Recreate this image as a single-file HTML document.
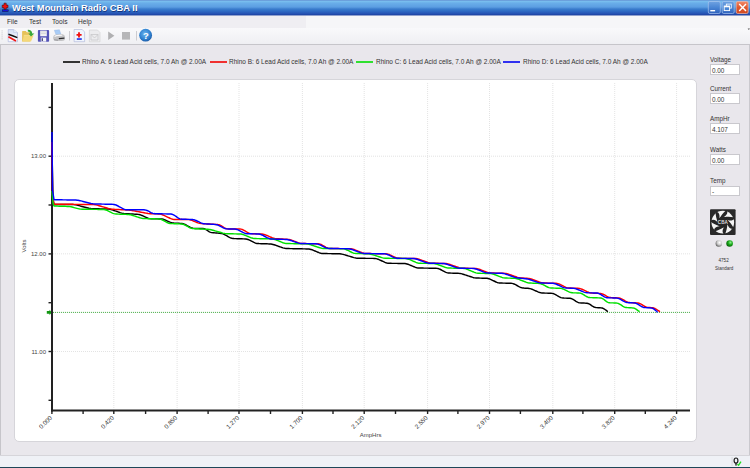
<!DOCTYPE html>
<html><head><meta charset="utf-8"><style>
*{margin:0;padding:0;box-sizing:border-box}
html,body{width:750px;height:468px;overflow:hidden;background:#e9e7ec;font-family:"Liberation Sans",sans-serif}
.abs{position:absolute}
#title{left:0;top:0;width:750px;height:16px;background:linear-gradient(#5a7ec8 0px,#7cc2f0 1px,#6aaee9 3px,#5c9ee2 7px,#3a7ccc 9px,#2f6cc4 11px,#2654b4 13.5px,#2048a8 14.5px,#c9cde0 16px)}
#title .t{left:12px;top:2.6px;font-size:9.4px;line-height:10px;font-weight:bold;color:#fff;text-shadow:0.6px 0.6px 0.4px rgba(10,30,90,0.7)}
#menu{left:0;top:16px;width:750px;height:12px;background:#efeef2}
#menu span{position:absolute;top:1px;font-size:7.7px;line-height:9px;color:#333;transform:scaleX(0.86);transform-origin:0 0}
#tool{left:0;top:28px;width:750px;height:16px;background:linear-gradient(#f9f9fb,#efeff3)}
#toolline{left:0;top:44px;width:750px;height:1px;background:#c6c5ca}
#lstrip{left:0;top:45px;width:1px;height:410px;background:#c6c5ca}
#rstrip{left:748.8px;top:45px;width:1.2px;height:410px;background:#cac9ce}
#panel{left:13.6px;top:78.7px;width:683px;height:363px;background:#fff;border:1.5px solid #d6d5da;border-radius:5px}
#status{left:0;top:455px;width:750px;height:12px;background:#eff1f6;border-top:1px solid #d6d5da}
#sbot{left:0;top:467px;width:750px;height:1px;background:#1e4658}
.leg{top:57.5px;font-size:7px;line-height:8px;color:#333;white-space:nowrap;transform:scaleX(0.926);transform-origin:0 0}
.ll{top:61px;height:1.6px;width:17px}
.lab{left:710px;font-size:6.3px;color:#333;line-height:7px}
.box{left:710.3px;width:29.5px;height:10.5px;background:#fff;border:1px solid #c9c8cd;font-size:6.4px;color:#333;padding-left:0.6px;padding-top:0.8px;line-height:10.6px;overflow:hidden}
</style></head><body>
<div id="title" class="abs"><div class="t abs">West Mountain Radio CBA II</div></div>
<svg class="abs" style="left:0;top:0" width="12" height="16" viewBox="0 0 12 16">
<path d="M4,3.2 L6.2,3.2 L6.2,5.1 L8,5.1 L8,7.7 L6.2,7.7 L6.2,9.3 L4,9.3 L4,7.7 L2.2,7.7 L2.2,5.1 L4,5.1 Z" fill="#f01010" stroke="#401010" stroke-width="0.6"/>
<rect x="2.4" y="9.8" width="5.8" height="1.8" fill="#1818e0" stroke="#101040" stroke-width="0.5"/>
</svg>

<svg class="abs" style="left:700px;top:0" width="50" height="16" viewBox="0 0 50 16">
<defs>
<linearGradient id="bg1" x1="0" y1="0" x2="0" y2="1"><stop offset="0" stop-color="#6fa2e2"/><stop offset="0.5" stop-color="#4a86d4"/><stop offset="1" stop-color="#2f62bd"/></linearGradient>
<linearGradient id="bg2" x1="0" y1="0" x2="0" y2="1"><stop offset="0" stop-color="#f08a6a"/><stop offset="0.5" stop-color="#e0582e"/><stop offset="1" stop-color="#d04a22"/></linearGradient>
</defs>
<rect x="8.3" y="1.5" width="12" height="12" rx="1.5" fill="url(#bg1)" stroke="#a8c4ee" stroke-width="0.7"/>
<rect x="22.2" y="1.5" width="12" height="12" rx="1.5" fill="url(#bg1)" stroke="#a8c4ee" stroke-width="0.7"/>
<rect x="36.2" y="1.5" width="12" height="12" rx="1.5" fill="url(#bg2)" stroke="#f4b8a8" stroke-width="0.7"/>
<rect x="10.3" y="10" width="4.8" height="1.4" fill="#fff"/>
<rect x="26.3" y="4.1" width="5" height="4" fill="none" stroke="#fff" stroke-width="0.8"/>
<rect x="24.2" y="6" width="5.4" height="4.6" fill="#4a86d4" stroke="#fff" stroke-width="0.9"/>
<rect x="24.2" y="6" width="5.4" height="1.3" fill="#fff"/>
<path d="M39.2,4 L46,11 M46,4 L39.2,11" stroke="#fff" stroke-width="1.4"/>
</svg>

<div id="menu" class="abs"><div class="abs" style="left:306px;top:0;width:444px;height:12px;background:#f6f6f8"></div><span style="left:7.2px">File</span><span style="left:28.8px">Test</span><span style="left:52.3px">Tools</span><span style="left:78px">Help</span></div>
<div id="tool" class="abs"></div>
<div id="toolline" class="abs"></div>
<svg class="abs" style="left:745px;top:27px" width="5" height="5" viewBox="0 0 5 5"><path d="M2.6,1.4 L5,1.4 L3.8,3 Z" fill="#555"/></svg>

<svg class="abs" style="left:0;top:0" width="160" height="46" viewBox="0 0 160 46">
<!-- grip -->
<g fill="#c4c4c8"><rect x="1.5" y="30.5" width="1.2" height="0.8"/><rect x="1.5" y="32.5" width="1.2" height="0.8"/><rect x="1.5" y="34.5" width="1.2" height="0.8"/><rect x="1.5" y="36.5" width="1.2" height="0.8"/><rect x="1.5" y="38.5" width="1.2" height="0.8"/></g>
<!-- icon1 chart doc -->
<defs><linearGradient id="docg" x1="0" y1="0" x2="0" y2="1"><stop offset="0" stop-color="#d4e0f6"/><stop offset="0.55" stop-color="#eaf0fb"/><stop offset="1" stop-color="#fbfcff"/></linearGradient></defs>
<path d="M8.2,29.6 L13.6,29.6 L17.5,32.6 L17.5,41.7 L8.2,41.7 Z" fill="url(#docg)" stroke="#a3acd8" stroke-width="0.6"/>
<path d="M13.6,29.6 L13.6,32.6 L17.5,32.6" fill="#e4ecf8" stroke="#b8c0e0" stroke-width="0.5"/>
<path d="M8.4,34.3 Q12.3,35.6 17.3,37.6" fill="none" stroke="#111" stroke-width="1.5"/>
<path d="M8.4,36.7 L16,40.9" fill="none" stroke="#f01818" stroke-width="1.7"/>
<!-- icon2 folder -->
<path d="M22.1,31.6 Q22.1,31 22.8,31 L25.8,31 L26.8,32.2 L30,32.2 L30,41.5 L22.1,41.5 Z" fill="#e6c258"/>
<path d="M23.8,35.3 L33.5,35.6 L31,41.4 L22.4,41.5 Z" fill="#f4d878"/>
<path d="M23.8,35.3 L33.5,35.6" stroke="#fae6a0" stroke-width="0.6"/>
<path d="M27.8,29.8 Q31.8,29.6 32.2,33.4 L34.4,33.4 L31,36.6 L28.4,33.4 L30.2,33.4 Q30,31.7 27.8,31.6 Z" fill="#3aa83a"/>
<!-- icon3 floppy -->
<rect x="37.9" y="30.1" width="11.2" height="11.7" rx="0.8" fill="#5454b8"/>
<rect x="40.2" y="30.6" width="6.6" height="5.6" fill="#f2f2f4"/>
<rect x="40.8" y="31.6" width="5.4" height="0.7" fill="#c8c8cc"/><rect x="40.8" y="33.4" width="5.4" height="0.7" fill="#c8c8cc"/>
<rect x="40.8" y="37.6" width="5.4" height="4.0" fill="#f4f4f8"/>
<rect x="41.6" y="38.2" width="1.3" height="2.8" fill="#3a3a7a"/>
<!-- icon4 printer -->
<path d="M54.3,30.3 L59.4,29.7 L60.9,34.2 L56.2,35 Z" fill="#a8ccf6" stroke="#90b0e0" stroke-width="0.4"/>
<path d="M53.2,37 Q53.4,35 56,34.6 L62,34 Q64.8,34.6 65,36.6 L65,39.2 Q64.6,40.9 62,40.9 L56,40.9 Q53.2,40.6 53.2,38.8 Z" fill="#c4c4c6"/>
<path d="M54.6,36.6 Q56,35.4 58.5,35.4 L62.2,35.2" fill="none" stroke="#f6f6f8" stroke-width="1.1"/>
<path d="M58.8,38.6 L64.4,38.2" stroke="#2c2c2e" stroke-width="1.2"/>
<path d="M54,39.8 L58,40.2" stroke="#8c8c90" stroke-width="0.8"/>
<!-- separator -->
<rect x="69" y="31" width="0.9" height="9.5" fill="#c8c8cc"/>
<!-- icon5 doc plus -->
<path d="M74.1,29.5 L82.2,29.5 L84.6,32 L84.6,41.7 L74.1,41.7 Z" fill="#f0f5fd" stroke="#a9b4d6" stroke-width="0.6"/>
<path d="M76.5,34.1 L78.1,34.1 L78.1,32.2 L79.9,32.2 L79.9,34.1 L81.6,34.1 L81.6,35.8 L79.9,35.8 L79.9,37.6 L78.1,37.6 L78.1,35.8 L76.5,35.8 Z" fill="#f01010"/>
<rect x="76.8" y="38.2" width="5.0" height="1.7" fill="#2a3ae6"/>
<!-- icon6 disabled doc -->
<path d="M89.4,30 L97.5,30 L100,32.5 L100,41.8 L89.4,41.8 Z" fill="#ececee" stroke="#d0d0d2" stroke-width="0.6"/>
<path d="M91,34.5 L98,34.5 L98,40 L91,40 Z M91,34.5 L94.5,38 L98,34.5" fill="none" stroke="#c4c4c6" stroke-width="0.7"/>
<!-- play -->
<path d="M108.2,31.6 L114.4,35.8 L108.2,40 Z" fill="#b0b0b2"/>
<!-- stop -->
<rect x="122" y="32" width="8" height="7.6" fill="#b6b6b8"/>
<!-- separator -->
<rect x="136" y="31" width="0.9" height="9.5" fill="#c8c8cc"/>
<!-- help -->
<defs><radialGradient id="hg" cx="0.45" cy="0.4" r="0.6"><stop offset="0" stop-color="#6cb4ee"/><stop offset="0.7" stop-color="#2f82d0"/><stop offset="1" stop-color="#1a5aa8"/></radialGradient></defs>
<circle cx="145.6" cy="35.2" r="6.4" fill="url(#hg)"/>
<text x="145.8" y="38.9" font-size="9.5" font-weight="bold" fill="#fff" text-anchor="middle" font-family="Liberation Sans, sans-serif">?</text>
</svg>

<div id="lstrip" class="abs"></div>
<div id="rstrip" class="abs"></div>
<div class="abs ll" style="left:63px;background:#333"></div><div class="abs leg" style="left:82.3px">Rhino A: 6 Lead Acid cells, 7.0 Ah @ 2.00A</div>
<div class="abs ll" style="left:209.6px;background:#f03030"></div><div class="abs leg" style="left:229.2px">Rhino B: 6 Lead Acid cells, 7.0 Ah @ 2.00A</div>
<div class="abs ll" style="left:356.4px;background:#30e030"></div><div class="abs leg" style="left:376px">Rhino C: 6 Lead Acid cells, 7.0 Ah @ 2.00A</div>
<div class="abs ll" style="left:503.1px;background:#3030f0"></div><div class="abs leg" style="left:522.7px">Rhino D: 6 Lead Acid cells, 7.0 Ah @ 2.00A</div>
<div id="panel" class="abs"></div>
<svg class="abs" style="left:0;top:0" width="750" height="468" viewBox="0 0 750 468" font-family="Liberation Sans, sans-serif">
<line x1="113.8" y1="83" x2="113.8" y2="409.5" stroke="#dcdcdc" stroke-width="0.8" stroke-dasharray="1,1"/>
<line x1="177.1" y1="83" x2="177.1" y2="409.5" stroke="#dcdcdc" stroke-width="0.8" stroke-dasharray="1,1"/>
<line x1="239.0" y1="83" x2="239.0" y2="409.5" stroke="#dcdcdc" stroke-width="0.8" stroke-dasharray="1,1"/>
<line x1="302.4" y1="83" x2="302.4" y2="409.5" stroke="#dcdcdc" stroke-width="0.8" stroke-dasharray="1,1"/>
<line x1="364.2" y1="83" x2="364.2" y2="409.5" stroke="#dcdcdc" stroke-width="0.8" stroke-dasharray="1,1"/>
<line x1="427.6" y1="83" x2="427.6" y2="409.5" stroke="#dcdcdc" stroke-width="0.8" stroke-dasharray="1,1"/>
<line x1="489.5" y1="83" x2="489.5" y2="409.5" stroke="#dcdcdc" stroke-width="0.8" stroke-dasharray="1,1"/>
<line x1="552.8" y1="83" x2="552.8" y2="409.5" stroke="#dcdcdc" stroke-width="0.8" stroke-dasharray="1,1"/>
<line x1="614.7" y1="83" x2="614.7" y2="409.5" stroke="#dcdcdc" stroke-width="0.8" stroke-dasharray="1,1"/>
<line x1="676.6" y1="83" x2="676.6" y2="409.5" stroke="#dcdcdc" stroke-width="0.8" stroke-dasharray="1,1"/>
<line x1="53" y1="156.2" x2="690" y2="156.2" stroke="#dcdcdc" stroke-width="0.8" stroke-dasharray="1,1"/>
<line x1="53" y1="253.8" x2="690" y2="253.8" stroke="#dcdcdc" stroke-width="0.8" stroke-dasharray="1,1"/>
<line x1="53" y1="351.5" x2="690" y2="351.5" stroke="#dcdcdc" stroke-width="0.8" stroke-dasharray="1,1"/>
<line x1="53" y1="312.4" x2="690" y2="312.4" stroke="#50b050" stroke-width="1" stroke-dasharray="1.1,0.9"/>
<path d="M46.8,311 L49.5,311 L49.5,309.8 L52,312.4 L49.5,315 L49.5,313.8 L46.8,313.8 Z" fill="#129612"/>
<line x1="52" y1="83" x2="52" y2="411.5" stroke="#222" stroke-width="2"/>
<line x1="51" y1="410.5" x2="690" y2="410.5" stroke="#222" stroke-width="2"/>
<line x1="48.5" y1="107.4" x2="51" y2="107.4" stroke="#222" stroke-width="1.4"/>
<line x1="48.5" y1="156.2" x2="51" y2="156.2" stroke="#222" stroke-width="1.4"/>
<line x1="48.5" y1="205.0" x2="51" y2="205.0" stroke="#222" stroke-width="1.4"/>
<line x1="48.5" y1="253.9" x2="51" y2="253.9" stroke="#222" stroke-width="1.4"/>
<line x1="48.5" y1="302.7" x2="51" y2="302.7" stroke="#222" stroke-width="1.4"/>
<line x1="48.5" y1="351.5" x2="51" y2="351.5" stroke="#222" stroke-width="1.4"/>
<line x1="48.5" y1="400.3" x2="51" y2="400.3" stroke="#222" stroke-width="1.4"/>
<text x="46" y="158.4" text-anchor="end" font-size="6" fill="#444">13.00</text>
<text x="46" y="256.1" text-anchor="end" font-size="6" fill="#444">12.00</text>
<text x="46" y="353.7" text-anchor="end" font-size="6" fill="#444">11.00</text>
<line x1="51.9" y1="411" x2="51.9" y2="414" stroke="#222" stroke-width="1.4"/>
<line x1="83.1" y1="411" x2="83.1" y2="414" stroke="#222" stroke-width="1.4"/>
<line x1="113.8" y1="411" x2="113.8" y2="414" stroke="#222" stroke-width="1.4"/>
<line x1="145.6" y1="411" x2="145.6" y2="414" stroke="#222" stroke-width="1.4"/>
<line x1="177.1" y1="411" x2="177.1" y2="414" stroke="#222" stroke-width="1.4"/>
<line x1="208.1" y1="411" x2="208.1" y2="414" stroke="#222" stroke-width="1.4"/>
<line x1="239.0" y1="411" x2="239.0" y2="414" stroke="#222" stroke-width="1.4"/>
<line x1="270.5" y1="411" x2="270.5" y2="414" stroke="#222" stroke-width="1.4"/>
<line x1="302.4" y1="411" x2="302.4" y2="414" stroke="#222" stroke-width="1.4"/>
<line x1="333.0" y1="411" x2="333.0" y2="414" stroke="#222" stroke-width="1.4"/>
<line x1="364.2" y1="411" x2="364.2" y2="414" stroke="#222" stroke-width="1.4"/>
<line x1="395.5" y1="411" x2="395.5" y2="414" stroke="#222" stroke-width="1.4"/>
<line x1="427.6" y1="411" x2="427.6" y2="414" stroke="#222" stroke-width="1.4"/>
<line x1="457.9" y1="411" x2="457.9" y2="414" stroke="#222" stroke-width="1.4"/>
<line x1="489.5" y1="411" x2="489.5" y2="414" stroke="#222" stroke-width="1.4"/>
<line x1="520.4" y1="411" x2="520.4" y2="414" stroke="#222" stroke-width="1.4"/>
<line x1="552.8" y1="411" x2="552.8" y2="414" stroke="#222" stroke-width="1.4"/>
<line x1="582.9" y1="411" x2="582.9" y2="414" stroke="#222" stroke-width="1.4"/>
<line x1="614.7" y1="411" x2="614.7" y2="414" stroke="#222" stroke-width="1.4"/>
<line x1="645.3" y1="411" x2="645.3" y2="414" stroke="#222" stroke-width="1.4"/>
<line x1="676.6" y1="411" x2="676.6" y2="414" stroke="#222" stroke-width="1.4"/>
<text transform="translate(52.5,418.3) rotate(-45)" text-anchor="end" font-size="6.2" fill="#333">0.000</text>
<text transform="translate(114.4,418.3) rotate(-45)" text-anchor="end" font-size="6.2" fill="#333">0.420</text>
<text transform="translate(177.7,418.3) rotate(-45)" text-anchor="end" font-size="6.2" fill="#333">0.850</text>
<text transform="translate(239.6,418.3) rotate(-45)" text-anchor="end" font-size="6.2" fill="#333">1.270</text>
<text transform="translate(303.0,418.3) rotate(-45)" text-anchor="end" font-size="6.2" fill="#333">1.700</text>
<text transform="translate(364.8,418.3) rotate(-45)" text-anchor="end" font-size="6.2" fill="#333">2.120</text>
<text transform="translate(428.2,418.3) rotate(-45)" text-anchor="end" font-size="6.2" fill="#333">2.550</text>
<text transform="translate(490.1,418.3) rotate(-45)" text-anchor="end" font-size="6.2" fill="#333">2.970</text>
<text transform="translate(553.4,418.3) rotate(-45)" text-anchor="end" font-size="6.2" fill="#333">3.400</text>
<text transform="translate(615.3,418.3) rotate(-45)" text-anchor="end" font-size="6.2" fill="#333">3.820</text>
<text transform="translate(677.2,418.3) rotate(-45)" text-anchor="end" font-size="6.2" fill="#333">4.240</text>
<text transform="translate(25.5,246) rotate(-90)" text-anchor="middle" font-size="6" fill="#444">Volts</text>
<text x="370.6" y="437.3" text-anchor="middle" font-size="6" fill="#444">AmpHrs</text>
<path d="M52.00,150.00 L53.00,200.00 L54.00,204.50 L55.00,204.50 L56.00,204.50 L57.00,204.50 L58.00,204.50 L59.00,204.50 L60.00,204.50 L61.00,204.50 L62.00,204.50 L63.00,204.50 L64.00,204.50 L65.00,204.50 L66.00,204.50 L67.00,204.50 L68.00,204.50 L69.00,204.50 L70.00,204.50 L71.00,204.50 L72.00,204.51 L73.00,204.53 L74.00,204.60 L75.00,204.73 L76.00,204.91 L77.00,205.14 L78.00,205.39 L79.00,205.65 L80.00,205.92 L81.00,206.18 L82.00,206.44 L83.00,206.70 L84.00,206.97 L85.00,207.23 L86.00,207.49 L87.00,207.75 L88.00,208.01 L89.00,208.25 L90.00,208.45 L91.00,208.59 L92.00,208.68 L93.00,208.73 L94.00,208.75 L95.00,208.77 L96.00,208.78 L97.00,208.80 L98.00,208.82 L99.00,208.83 L100.00,208.85 L101.00,208.86 L102.00,208.88 L103.00,208.89 L104.00,208.91 L105.00,208.92 L106.00,208.94 L107.00,208.96 L108.00,209.01 L109.00,209.09 L110.00,209.25 L111.00,209.49 L112.00,209.79 L113.00,210.13 L114.00,210.48 L115.00,210.83 L116.00,211.18 L117.00,211.53 L118.00,211.88 L119.00,212.23 L120.00,212.58 L121.00,212.90 L122.00,213.17 L123.00,213.38 L124.00,213.52 L125.00,213.61 L126.00,213.68 L127.00,213.73 L128.00,213.79 L129.00,213.84 L130.00,213.89 L131.00,213.94 L132.00,214.00 L133.00,214.05 L134.00,214.10 L135.00,214.16 L136.00,214.21 L137.00,214.28 L138.00,214.37 L139.00,214.52 L140.00,214.77 L141.00,215.11 L142.00,215.52 L143.00,215.96 L144.00,216.41 L145.00,216.87 L146.00,217.32 L147.00,217.76 L148.00,218.14 L149.00,218.43 L150.00,218.62 L151.00,218.71 L152.00,218.76 L153.00,218.79 L154.00,218.81 L155.00,218.83 L156.00,218.85 L157.00,218.87 L158.00,218.89 L159.00,218.91 L160.00,218.94 L161.00,218.99 L162.00,219.08 L163.00,219.27 L164.00,219.56 L165.00,219.95 L166.00,220.38 L167.00,220.84 L168.00,221.30 L169.00,221.75 L170.00,222.17 L171.00,222.53 L172.00,222.81 L173.00,222.98 L174.00,223.08 L175.00,223.14 L176.00,223.18 L177.00,223.23 L178.00,223.27 L179.00,223.31 L180.00,223.36 L181.00,223.42 L182.00,223.53 L183.00,223.72 L184.00,224.04 L185.00,224.48 L186.00,225.00 L187.00,225.55 L188.00,226.12 L189.00,226.68 L190.00,227.22 L191.00,227.70 L192.00,228.06 L193.00,228.28 L194.00,228.38 L195.00,228.42 L196.00,228.43 L197.00,228.44 L198.00,228.45 L199.00,228.45 L200.00,228.46 L201.00,228.47 L202.00,228.49 L203.00,228.56 L204.00,228.73 L205.00,229.06 L206.00,229.58 L207.00,230.23 L208.00,230.92 L209.00,231.57 L210.00,232.08 L211.00,232.42 L212.00,232.61 L213.00,232.73 L214.00,232.81 L215.00,232.89 L216.00,232.97 L217.00,233.05 L218.00,233.12 L219.00,233.20 L220.00,233.29 L221.00,233.41 L222.00,233.59 L223.00,233.88 L224.00,234.30 L225.00,234.81 L226.00,235.36 L227.00,235.94 L228.00,236.52 L229.00,237.08 L230.00,237.59 L231.00,238.01 L232.00,238.31 L233.00,238.48 L234.00,238.56 L235.00,238.61 L236.00,238.64 L237.00,238.67 L238.00,238.71 L239.00,238.74 L240.00,238.77 L241.00,238.80 L242.00,238.83 L243.00,238.86 L244.00,238.90 L245.00,238.95 L246.00,239.04 L247.00,239.21 L248.00,239.50 L249.00,239.90 L250.00,240.38 L251.00,240.89 L252.00,241.41 L253.00,241.92 L254.00,242.42 L255.00,242.86 L256.00,243.20 L257.00,243.42 L258.00,243.53 L259.00,243.59 L260.00,243.62 L261.00,243.66 L262.00,243.69 L263.00,243.72 L264.00,243.75 L265.00,243.78 L266.00,243.81 L267.00,243.84 L268.00,243.88 L269.00,243.91 L270.00,243.96 L271.00,244.04 L272.00,244.20 L273.00,244.43 L274.00,244.72 L275.00,245.06 L276.00,245.41 L277.00,245.76 L278.00,246.11 L279.00,246.46 L280.00,246.81 L281.00,247.16 L282.00,247.51 L283.00,247.83 L284.00,248.12 L285.00,248.33 L286.00,248.46 L287.00,248.53 L288.00,248.56 L289.00,248.58 L290.00,248.60 L291.00,248.62 L292.00,248.64 L293.00,248.66 L294.00,248.68 L295.00,248.70 L296.00,248.72 L297.00,248.74 L298.00,248.76 L299.00,248.78 L300.00,248.80 L301.00,248.82 L302.00,248.84 L303.00,248.86 L304.00,248.88 L305.00,248.90 L306.00,248.92 L307.00,248.94 L308.00,248.97 L309.00,249.05 L310.00,249.19 L311.00,249.43 L312.00,249.76 L313.00,250.15 L314.00,250.56 L315.00,250.98 L316.00,251.40 L317.00,251.82 L318.00,252.23 L319.00,252.63 L320.00,252.98 L321.00,253.25 L322.00,253.42 L323.00,253.50 L324.00,253.54 L325.00,253.56 L326.00,253.57 L327.00,253.59 L328.00,253.60 L329.00,253.62 L330.00,253.63 L331.00,253.65 L332.00,253.66 L333.00,253.68 L334.00,253.69 L335.00,253.71 L336.00,253.72 L337.00,253.74 L338.00,253.75 L339.00,253.78 L340.00,253.83 L341.00,253.94 L342.00,254.11 L343.00,254.35 L344.00,254.62 L345.00,254.92 L346.00,255.22 L347.00,255.52 L348.00,255.82 L349.00,256.13 L350.00,256.43 L351.00,256.73 L352.00,257.03 L353.00,257.33 L354.00,257.62 L355.00,257.88 L356.00,258.08 L357.00,258.21 L358.00,258.28 L359.00,258.31 L360.00,258.32 L361.00,258.32 L362.00,258.33 L363.00,258.33 L364.00,258.34 L365.00,258.34 L366.00,258.35 L367.00,258.35 L368.00,258.36 L369.00,258.36 L370.00,258.37 L371.00,258.37 L372.00,258.38 L373.00,258.39 L374.00,258.41 L375.00,258.47 L376.00,258.61 L377.00,258.85 L378.00,259.20 L379.00,259.62 L380.00,260.07 L381.00,260.53 L382.00,260.99 L383.00,261.45 L384.00,261.91 L385.00,262.35 L386.00,262.73 L387.00,263.02 L388.00,263.20 L389.00,263.29 L390.00,263.33 L391.00,263.34 L392.00,263.35 L393.00,263.36 L394.00,263.37 L395.00,263.38 L396.00,263.39 L397.00,263.40 L398.00,263.41 L399.00,263.42 L400.00,263.43 L401.00,263.45 L402.00,263.46 L403.00,263.47 L404.00,263.50 L405.00,263.56 L406.00,263.70 L407.00,263.94 L408.00,264.26 L409.00,264.65 L410.00,265.06 L411.00,265.48 L412.00,265.90 L413.00,266.32 L414.00,266.73 L415.00,267.13 L416.00,267.48 L417.00,267.75 L418.00,267.92 L419.00,268.00 L420.00,268.04 L421.00,268.06 L422.00,268.07 L423.00,268.08 L424.00,268.10 L425.00,268.11 L426.00,268.13 L427.00,268.14 L428.00,268.15 L429.00,268.17 L430.00,268.18 L431.00,268.20 L432.00,268.21 L433.00,268.22 L434.00,268.24 L435.00,268.26 L436.00,268.29 L437.00,268.37 L438.00,268.54 L439.00,268.83 L440.00,269.25 L441.00,269.74 L442.00,270.27 L443.00,270.81 L444.00,271.35 L445.00,271.87 L446.00,272.33 L447.00,272.69 L448.00,272.91 L449.00,273.02 L450.00,273.08 L451.00,273.12 L452.00,273.15 L453.00,273.18 L454.00,273.20 L455.00,273.23 L456.00,273.26 L457.00,273.29 L458.00,273.33 L459.00,273.39 L460.00,273.48 L461.00,273.65 L462.00,273.89 L463.00,274.18 L464.00,274.49 L465.00,274.82 L466.00,275.15 L467.00,275.48 L468.00,275.82 L469.00,276.15 L470.00,276.48 L471.00,276.81 L472.00,277.13 L473.00,277.43 L474.00,277.68 L475.00,277.87 L476.00,277.98 L477.00,278.04 L478.00,278.07 L479.00,278.09 L480.00,278.12 L481.00,278.14 L482.00,278.16 L483.00,278.18 L484.00,278.20 L485.00,278.23 L486.00,278.26 L487.00,278.34 L488.00,278.49 L489.00,278.75 L490.00,279.11 L491.00,279.55 L492.00,280.03 L493.00,280.53 L494.00,281.02 L495.00,281.51 L496.00,281.98 L497.00,282.39 L498.00,282.71 L499.00,282.91 L500.00,283.01 L501.00,283.05 L502.00,283.08 L503.00,283.10 L504.00,283.12 L505.00,283.14 L506.00,283.16 L507.00,283.18 L508.00,283.20 L509.00,283.22 L510.00,283.25 L511.00,283.29 L512.00,283.40 L513.00,283.62 L514.00,283.97 L515.00,284.43 L516.00,284.95 L517.00,285.49 L518.00,286.03 L519.00,286.56 L520.00,287.06 L521.00,287.48 L522.00,287.79 L523.00,287.98 L524.00,288.09 L525.00,288.16 L526.00,288.21 L527.00,288.26 L528.00,288.33 L529.00,288.44 L530.00,288.63 L531.00,288.92 L532.00,289.28 L533.00,289.69 L534.00,290.12 L535.00,290.55 L536.00,290.98 L537.00,291.41 L538.00,291.83 L539.00,292.22 L540.00,292.56 L541.00,292.81 L542.00,292.96 L543.00,293.03 L544.00,293.07 L545.00,293.10 L546.00,293.12 L547.00,293.15 L548.00,293.17 L549.00,293.19 L550.00,293.22 L551.00,293.26 L552.00,293.36 L553.00,293.54 L554.00,293.87 L555.00,294.33 L556.00,294.89 L557.00,295.50 L558.00,296.11 L559.00,296.71 L560.00,297.23 L561.00,297.64 L562.00,297.89 L563.00,298.02 L564.00,298.08 L565.00,298.11 L566.00,298.14 L567.00,298.17 L568.00,298.20 L569.00,298.24 L570.00,298.33 L571.00,298.52 L572.00,298.85 L573.00,299.35 L574.00,299.98 L575.00,300.66 L576.00,301.33 L577.00,301.93 L578.00,302.39 L579.00,302.69 L580.00,302.85 L581.00,302.93 L582.00,302.99 L583.00,303.03 L584.00,303.08 L585.00,303.13 L586.00,303.19 L587.00,303.29 L588.00,303.49 L589.00,303.86 L590.00,304.40 L591.00,305.08 L592.00,305.80 L593.00,306.47 L594.00,307.00 L595.00,307.35 L596.00,307.54 L597.00,307.64 L598.00,307.70 L599.00,307.76 L600.00,307.81 L601.00,307.89 L602.00,308.03 L603.00,308.31 L604.00,308.81 L605.00,309.48 L606.00,310.22 L607.00,310.84 L607.50,312.00" fill="none" stroke="#000000" stroke-width="1.45" stroke-linejoin="round"/>
<path d="M52.00,142.00 L52.50,195.00 L54.00,204.20 L55.00,204.21 L56.00,204.22 L57.00,204.22 L58.00,204.23 L59.00,204.24 L60.00,204.24 L61.00,204.25 L62.00,204.26 L63.00,204.27 L64.00,204.27 L65.00,204.28 L66.00,204.29 L67.00,204.30 L68.00,204.30 L69.00,204.31 L70.00,204.32 L71.00,204.32 L72.00,204.33 L73.00,204.34 L74.00,204.35 L75.00,204.35 L76.00,204.36 L77.00,204.37 L78.00,204.38 L79.00,204.38 L80.00,204.39 L81.00,204.40 L82.00,204.41 L83.00,204.41 L84.00,204.42 L85.00,204.43 L86.00,204.43 L87.00,204.44 L88.00,204.45 L89.00,204.46 L90.00,204.46 L91.00,204.47 L92.00,204.48 L93.00,204.51 L94.00,204.57 L95.00,204.69 L96.00,204.89 L97.00,205.13 L98.00,205.41 L99.00,205.70 L100.00,206.00 L101.00,206.29 L102.00,206.59 L103.00,206.88 L104.00,207.17 L105.00,207.47 L106.00,207.76 L107.00,208.05 L108.00,208.34 L109.00,208.62 L110.00,208.87 L111.00,209.06 L112.00,209.20 L113.00,209.28 L114.00,209.34 L115.00,209.39 L116.00,209.44 L117.00,209.49 L118.00,209.53 L119.00,209.58 L120.00,209.63 L121.00,209.68 L122.00,209.72 L123.00,209.77 L124.00,209.82 L125.00,209.86 L126.00,209.91 L127.00,209.96 L128.00,210.02 L129.00,210.09 L130.00,210.19 L131.00,210.32 L132.00,210.49 L133.00,210.67 L134.00,210.86 L135.00,211.05 L136.00,211.24 L137.00,211.43 L138.00,211.62 L139.00,211.81 L140.00,211.99 L141.00,212.18 L142.00,212.37 L143.00,212.56 L144.00,212.75 L145.00,212.94 L146.00,213.13 L147.00,213.31 L148.00,213.47 L149.00,213.60 L150.00,213.69 L151.00,213.74 L152.00,213.77 L153.00,213.80 L154.00,213.82 L155.00,213.85 L156.00,213.87 L157.00,213.90 L158.00,213.93 L159.00,213.98 L160.00,214.08 L161.00,214.27 L162.00,214.57 L163.00,214.97 L164.00,215.42 L165.00,215.88 L166.00,216.35 L167.00,216.82 L168.00,217.29 L169.00,217.76 L170.00,218.22 L171.00,218.65 L172.00,219.01 L173.00,219.27 L174.00,219.41 L175.00,219.48 L176.00,219.50 L177.00,219.50 L178.00,219.50 L179.00,219.50 L180.00,219.50 L181.00,219.50 L182.00,219.50 L183.00,219.50 L184.00,219.50 L185.00,219.50 L186.00,219.50 L187.00,219.51 L188.00,219.54 L189.00,219.63 L190.00,219.81 L191.00,220.08 L192.00,220.44 L193.00,220.84 L194.00,221.25 L195.00,221.67 L196.00,222.08 L197.00,222.48 L198.00,222.86 L199.00,223.17 L200.00,223.39 L201.00,223.54 L202.00,223.63 L203.00,223.69 L204.00,223.75 L205.00,223.80 L206.00,223.86 L207.00,223.91 L208.00,223.97 L209.00,224.02 L210.00,224.08 L211.00,224.13 L212.00,224.19 L213.00,224.24 L214.00,224.30 L215.00,224.35 L216.00,224.41 L217.00,224.48 L218.00,224.59 L219.00,224.80 L220.00,225.15 L221.00,225.64 L222.00,226.24 L223.00,226.88 L224.00,227.51 L225.00,228.07 L226.00,228.49 L227.00,228.75 L228.00,228.87 L229.00,228.91 L230.00,228.92 L231.00,228.93 L232.00,228.94 L233.00,228.94 L234.00,228.95 L235.00,228.96 L236.00,228.96 L237.00,228.97 L238.00,228.97 L239.00,228.99 L240.00,229.03 L241.00,229.14 L242.00,229.38 L243.00,229.77 L244.00,230.29 L245.00,230.89 L246.00,231.50 L247.00,232.11 L248.00,232.67 L249.00,233.13 L250.00,233.46 L251.00,233.64 L252.00,233.73 L253.00,233.77 L254.00,233.80 L255.00,233.82 L256.00,233.84 L257.00,233.86 L258.00,233.88 L259.00,233.91 L260.00,233.93 L261.00,233.97 L262.00,234.04 L263.00,234.18 L264.00,234.41 L265.00,234.73 L266.00,235.12 L267.00,235.53 L268.00,235.95 L269.00,236.38 L270.00,236.80 L271.00,237.22 L272.00,237.63 L273.00,237.99 L274.00,238.28 L275.00,238.48 L276.00,238.60 L277.00,238.68 L278.00,238.75 L279.00,238.81 L280.00,238.87 L281.00,238.94 L282.00,239.00 L283.00,239.06 L284.00,239.12 L285.00,239.19 L286.00,239.25 L287.00,239.32 L288.00,239.40 L289.00,239.52 L290.00,239.71 L291.00,239.98 L292.00,240.32 L293.00,240.70 L294.00,241.10 L295.00,241.50 L296.00,241.90 L297.00,242.30 L298.00,242.67 L299.00,243.01 L300.00,243.27 L301.00,243.42 L302.00,243.50 L303.00,243.54 L304.00,243.56 L305.00,243.57 L306.00,243.59 L307.00,243.60 L308.00,243.62 L309.00,243.63 L310.00,243.65 L311.00,243.66 L312.00,243.68 L313.00,243.69 L314.00,243.71 L315.00,243.72 L316.00,243.74 L317.00,243.76 L318.00,243.81 L319.00,243.92 L320.00,244.15 L321.00,244.52 L322.00,245.01 L323.00,245.57 L324.00,246.15 L325.00,246.73 L326.00,247.29 L327.00,247.78 L328.00,248.15 L329.00,248.37 L330.00,248.48 L331.00,248.52 L332.00,248.53 L333.00,248.54 L334.00,248.55 L335.00,248.56 L336.00,248.57 L337.00,248.57 L338.00,248.58 L339.00,248.59 L340.00,248.60 L341.00,248.61 L342.00,248.62 L343.00,248.62 L344.00,248.63 L345.00,248.64 L346.00,248.65 L347.00,248.66 L348.00,248.67 L349.00,248.68 L350.00,248.71 L351.00,248.78 L352.00,248.94 L353.00,249.19 L354.00,249.53 L355.00,249.90 L356.00,250.30 L357.00,250.70 L358.00,251.10 L359.00,251.50 L360.00,251.90 L361.00,252.30 L362.00,252.67 L363.00,253.01 L364.00,253.26 L365.00,253.42 L366.00,253.50 L367.00,253.53 L368.00,253.55 L369.00,253.56 L370.00,253.57 L371.00,253.59 L372.00,253.60 L373.00,253.61 L374.00,253.62 L375.00,253.64 L376.00,253.65 L377.00,253.66 L378.00,253.67 L379.00,253.69 L380.00,253.70 L381.00,253.71 L382.00,253.72 L383.00,253.74 L384.00,253.75 L385.00,253.77 L386.00,253.81 L387.00,253.90 L388.00,254.10 L389.00,254.41 L390.00,254.83 L391.00,255.31 L392.00,255.80 L393.00,256.30 L394.00,256.79 L395.00,257.27 L396.00,257.69 L397.00,258.00 L398.00,258.20 L399.00,258.29 L400.00,258.32 L401.00,258.34 L402.00,258.35 L403.00,258.36 L404.00,258.37 L405.00,258.38 L406.00,258.39 L407.00,258.40 L408.00,258.41 L409.00,258.42 L410.00,258.43 L411.00,258.44 L412.00,258.45 L413.00,258.46 L414.00,258.47 L415.00,258.50 L416.00,258.57 L417.00,258.71 L418.00,258.94 L419.00,259.25 L420.00,259.59 L421.00,259.95 L422.00,260.31 L423.00,260.67 L424.00,261.03 L425.00,261.39 L426.00,261.75 L427.00,262.11 L428.00,262.45 L429.00,262.76 L430.00,262.99 L431.00,263.14 L432.00,263.21 L433.00,263.25 L434.00,263.27 L435.00,263.29 L436.00,263.31 L437.00,263.32 L438.00,263.34 L439.00,263.36 L440.00,263.38 L441.00,263.39 L442.00,263.41 L443.00,263.43 L444.00,263.45 L445.00,263.49 L446.00,263.56 L447.00,263.70 L448.00,263.92 L449.00,264.21 L450.00,264.53 L451.00,264.87 L452.00,265.21 L453.00,265.56 L454.00,265.90 L455.00,266.24 L456.00,266.59 L457.00,266.93 L458.00,267.27 L459.00,267.59 L460.00,267.88 L461.00,268.10 L462.00,268.23 L463.00,268.29 L464.00,268.32 L465.00,268.32 L466.00,268.33 L467.00,268.34 L468.00,268.34 L469.00,268.35 L470.00,268.36 L471.00,268.36 L472.00,268.37 L473.00,268.38 L474.00,268.39 L475.00,268.41 L476.00,268.48 L477.00,268.63 L478.00,268.87 L479.00,269.19 L480.00,269.55 L481.00,269.93 L482.00,270.32 L483.00,270.70 L484.00,271.08 L485.00,271.47 L486.00,271.85 L487.00,272.21 L488.00,272.53 L489.00,272.78 L490.00,272.93 L491.00,273.01 L492.00,273.05 L493.00,273.07 L494.00,273.09 L495.00,273.11 L496.00,273.12 L497.00,273.14 L498.00,273.16 L499.00,273.18 L500.00,273.19 L501.00,273.21 L502.00,273.23 L503.00,273.25 L504.00,273.29 L505.00,273.36 L506.00,273.50 L507.00,273.72 L508.00,274.01 L509.00,274.34 L510.00,274.68 L511.00,275.03 L512.00,275.38 L513.00,275.72 L514.00,276.07 L515.00,276.42 L516.00,276.76 L517.00,277.09 L518.00,277.39 L519.00,277.63 L520.00,277.80 L521.00,277.91 L522.00,277.99 L523.00,278.05 L524.00,278.12 L525.00,278.18 L526.00,278.25 L527.00,278.31 L528.00,278.39 L529.00,278.51 L530.00,278.69 L531.00,278.95 L532.00,279.27 L533.00,279.63 L534.00,280.00 L535.00,280.38 L536.00,280.75 L537.00,281.12 L538.00,281.50 L539.00,281.87 L540.00,282.23 L541.00,282.54 L542.00,282.78 L543.00,282.94 L544.00,283.01 L545.00,283.05 L546.00,283.07 L547.00,283.09 L548.00,283.11 L549.00,283.13 L550.00,283.15 L551.00,283.17 L552.00,283.19 L553.00,283.21 L554.00,283.22 L555.00,283.25 L556.00,283.30 L557.00,283.40 L558.00,283.61 L559.00,283.94 L560.00,284.38 L561.00,284.87 L562.00,285.39 L563.00,285.91 L564.00,286.43 L565.00,286.92 L566.00,287.36 L567.00,287.70 L568.00,287.91 L569.00,288.01 L570.00,288.06 L571.00,288.09 L572.00,288.12 L573.00,288.14 L574.00,288.16 L575.00,288.18 L576.00,288.21 L577.00,288.24 L578.00,288.28 L579.00,288.38 L580.00,288.57 L581.00,288.87 L582.00,289.27 L583.00,289.71 L584.00,290.18 L585.00,290.65 L586.00,291.12 L587.00,291.59 L588.00,292.03 L589.00,292.43 L590.00,292.74 L591.00,292.94 L592.00,293.06 L593.00,293.12 L594.00,293.17 L595.00,293.21 L596.00,293.25 L597.00,293.29 L598.00,293.33 L599.00,293.38 L600.00,293.45 L601.00,293.58 L602.00,293.82 L603.00,294.20 L604.00,294.68 L605.00,295.22 L606.00,295.78 L607.00,296.32 L608.00,296.81 L609.00,297.18 L610.00,297.42 L611.00,297.55 L612.00,297.63 L613.00,297.68 L614.00,297.72 L615.00,297.77 L616.00,297.81 L617.00,297.86 L618.00,297.93 L619.00,298.04 L620.00,298.26 L621.00,298.61 L622.00,299.08 L623.00,299.64 L624.00,300.22 L625.00,300.81 L626.00,301.36 L627.00,301.85 L628.00,302.21 L629.00,302.44 L630.00,302.56 L631.00,302.63 L632.00,302.68 L633.00,302.72 L634.00,302.76 L635.00,302.81 L636.00,302.85 L637.00,302.92 L638.00,303.03 L639.00,303.24 L640.00,303.59 L641.00,304.08 L642.00,304.68 L643.00,305.31 L644.00,305.94 L645.00,306.50 L646.00,306.93 L647.00,307.22 L648.00,307.38 L649.00,307.47 L650.00,307.54 L651.00,307.60 L652.00,307.68 L653.00,307.82 L654.00,308.08 L655.00,308.51 L656.00,309.10 L657.00,309.77 L658.00,310.41 L659.00,310.94 L659.80,312.00" fill="none" stroke="#ff0000" stroke-width="1.45" stroke-linejoin="round"/>
<path d="M52.00,191.00 L53.00,203.00 L54.00,206.00 L55.00,206.04 L56.00,206.07 L57.00,206.09 L58.00,206.13 L59.00,206.16 L60.00,206.19 L61.00,206.22 L62.00,206.25 L63.00,206.28 L64.00,206.31 L65.00,206.34 L66.00,206.37 L67.00,206.41 L68.00,206.45 L69.00,206.52 L70.00,206.65 L71.00,206.83 L72.00,207.06 L73.00,207.31 L74.00,207.58 L75.00,207.85 L76.00,208.12 L77.00,208.39 L78.00,208.64 L79.00,208.87 L80.00,209.04 L81.00,209.15 L82.00,209.21 L83.00,209.23 L84.00,209.25 L85.00,209.26 L86.00,209.27 L87.00,209.28 L88.00,209.29 L89.00,209.31 L90.00,209.32 L91.00,209.33 L92.00,209.34 L93.00,209.35 L94.00,209.36 L95.00,209.38 L96.00,209.39 L97.00,209.40 L98.00,209.41 L99.00,209.42 L100.00,209.43 L101.00,209.45 L102.00,209.46 L103.00,209.49 L104.00,209.55 L105.00,209.69 L106.00,209.95 L107.00,210.33 L108.00,210.79 L109.00,211.30 L110.00,211.83 L111.00,212.35 L112.00,212.86 L113.00,213.31 L114.00,213.66 L115.00,213.89 L116.00,214.02 L117.00,214.08 L118.00,214.12 L119.00,214.15 L120.00,214.19 L121.00,214.22 L122.00,214.25 L123.00,214.28 L124.00,214.31 L125.00,214.34 L126.00,214.37 L127.00,214.41 L128.00,214.46 L129.00,214.54 L130.00,214.68 L131.00,214.90 L132.00,215.19 L133.00,215.50 L134.00,215.83 L135.00,216.17 L136.00,216.50 L137.00,216.83 L138.00,217.17 L139.00,217.50 L140.00,217.81 L141.00,218.09 L142.00,218.31 L143.00,218.45 L144.00,218.53 L145.00,218.58 L146.00,218.61 L147.00,218.63 L148.00,218.66 L149.00,218.68 L150.00,218.71 L151.00,218.74 L152.00,218.76 L153.00,218.79 L154.00,218.82 L155.00,218.84 L156.00,218.87 L157.00,218.89 L158.00,218.93 L159.00,218.98 L160.00,219.11 L161.00,219.35 L162.00,219.73 L163.00,220.24 L164.00,220.81 L165.00,221.40 L166.00,221.98 L167.00,222.52 L168.00,222.96 L169.00,223.28 L170.00,223.47 L171.00,223.56 L172.00,223.61 L173.00,223.65 L174.00,223.68 L175.00,223.72 L176.00,223.75 L177.00,223.79 L178.00,223.82 L179.00,223.85 L180.00,223.89 L181.00,223.94 L182.00,224.05 L183.00,224.24 L184.00,224.57 L185.00,225.02 L186.00,225.56 L187.00,226.13 L188.00,226.72 L189.00,227.28 L190.00,227.78 L191.00,228.17 L192.00,228.42 L193.00,228.56 L194.00,228.64 L195.00,228.69 L196.00,228.74 L197.00,228.78 L198.00,228.83 L199.00,228.88 L200.00,228.93 L201.00,228.97 L202.00,229.02 L203.00,229.07 L204.00,229.12 L205.00,229.16 L206.00,229.21 L207.00,229.26 L208.00,229.32 L209.00,229.41 L210.00,229.55 L211.00,229.74 L212.00,229.99 L213.00,230.26 L214.00,230.55 L215.00,230.83 L216.00,231.12 L217.00,231.41 L218.00,231.69 L219.00,231.98 L220.00,232.27 L221.00,232.55 L222.00,232.84 L223.00,233.11 L224.00,233.35 L225.00,233.54 L226.00,233.65 L227.00,233.72 L228.00,233.75 L229.00,233.77 L230.00,233.79 L231.00,233.81 L232.00,233.82 L233.00,233.84 L234.00,233.86 L235.00,233.88 L236.00,233.89 L237.00,233.91 L238.00,233.93 L239.00,233.95 L240.00,233.99 L241.00,234.08 L242.00,234.25 L243.00,234.51 L244.00,234.87 L245.00,235.27 L246.00,235.68 L247.00,236.10 L248.00,236.52 L249.00,236.94 L250.00,237.35 L251.00,237.74 L252.00,238.07 L253.00,238.31 L254.00,238.46 L255.00,238.53 L256.00,238.57 L257.00,238.60 L258.00,238.62 L259.00,238.65 L260.00,238.67 L261.00,238.69 L262.00,238.72 L263.00,238.74 L264.00,238.77 L265.00,238.79 L266.00,238.81 L267.00,238.84 L268.00,238.86 L269.00,238.88 L270.00,238.91 L271.00,238.93 L272.00,238.98 L273.00,239.07 L274.00,239.24 L275.00,239.51 L276.00,239.86 L277.00,240.25 L278.00,240.67 L279.00,241.08 L280.00,241.50 L281.00,241.92 L282.00,242.32 L283.00,242.71 L284.00,243.04 L285.00,243.29 L286.00,243.44 L287.00,243.52 L288.00,243.55 L289.00,243.57 L290.00,243.59 L291.00,243.61 L292.00,243.62 L293.00,243.64 L294.00,243.66 L295.00,243.68 L296.00,243.69 L297.00,243.71 L298.00,243.73 L299.00,243.74 L300.00,243.76 L301.00,243.78 L302.00,243.80 L303.00,243.81 L304.00,243.83 L305.00,243.85 L306.00,243.89 L307.00,243.96 L308.00,244.09 L309.00,244.30 L310.00,244.58 L311.00,244.89 L312.00,245.21 L313.00,245.54 L314.00,245.87 L315.00,246.20 L316.00,246.53 L317.00,246.86 L318.00,247.19 L319.00,247.51 L320.00,247.82 L321.00,248.10 L322.00,248.31 L323.00,248.43 L324.00,248.50 L325.00,248.52 L326.00,248.54 L327.00,248.54 L328.00,248.55 L329.00,248.56 L330.00,248.57 L331.00,248.58 L332.00,248.59 L333.00,248.60 L334.00,248.61 L335.00,248.62 L336.00,248.62 L337.00,248.63 L338.00,248.64 L339.00,248.65 L340.00,248.66 L341.00,248.67 L342.00,248.70 L343.00,248.76 L344.00,248.90 L345.00,249.16 L346.00,249.53 L347.00,249.98 L348.00,250.47 L349.00,250.97 L350.00,251.48 L351.00,251.98 L352.00,252.46 L353.00,252.88 L354.00,253.20 L355.00,253.40 L356.00,253.51 L357.00,253.55 L358.00,253.57 L359.00,253.59 L360.00,253.61 L361.00,253.63 L362.00,253.65 L363.00,253.67 L364.00,253.69 L365.00,253.71 L366.00,253.72 L367.00,253.75 L368.00,253.78 L369.00,253.85 L370.00,253.99 L371.00,254.20 L372.00,254.47 L373.00,254.77 L374.00,255.09 L375.00,255.42 L376.00,255.74 L377.00,256.07 L378.00,256.39 L379.00,256.71 L380.00,257.04 L381.00,257.36 L382.00,257.66 L383.00,257.92 L384.00,258.12 L385.00,258.24 L386.00,258.30 L387.00,258.32 L388.00,258.33 L389.00,258.34 L390.00,258.35 L391.00,258.36 L392.00,258.37 L393.00,258.38 L394.00,258.39 L395.00,258.39 L396.00,258.40 L397.00,258.41 L398.00,258.42 L399.00,258.43 L400.00,258.44 L401.00,258.45 L402.00,258.45 L403.00,258.46 L404.00,258.47 L405.00,258.50 L406.00,258.56 L407.00,258.70 L408.00,258.94 L409.00,259.28 L410.00,259.69 L411.00,260.13 L412.00,260.58 L413.00,261.04 L414.00,261.49 L415.00,261.94 L416.00,262.37 L417.00,262.74 L418.00,263.03 L419.00,263.21 L420.00,263.29 L421.00,263.33 L422.00,263.35 L423.00,263.36 L424.00,263.37 L425.00,263.38 L426.00,263.39 L427.00,263.40 L428.00,263.42 L429.00,263.43 L430.00,263.44 L431.00,263.45 L432.00,263.47 L433.00,263.49 L434.00,263.56 L435.00,263.70 L436.00,263.92 L437.00,264.22 L438.00,264.58 L439.00,264.95 L440.00,265.33 L441.00,265.71 L442.00,266.09 L443.00,266.47 L444.00,266.85 L445.00,267.21 L446.00,267.53 L447.00,267.78 L448.00,267.94 L449.00,268.02 L450.00,268.06 L451.00,268.09 L452.00,268.11 L453.00,268.13 L454.00,268.16 L455.00,268.18 L456.00,268.20 L457.00,268.22 L458.00,268.24 L459.00,268.27 L460.00,268.29 L461.00,268.31 L462.00,268.34 L463.00,268.38 L464.00,268.47 L465.00,268.64 L466.00,268.91 L467.00,269.26 L468.00,269.66 L469.00,270.08 L470.00,270.49 L471.00,270.91 L472.00,271.33 L473.00,271.75 L474.00,272.16 L475.00,272.54 L476.00,272.87 L477.00,273.10 L478.00,273.24 L479.00,273.31 L480.00,273.34 L481.00,273.36 L482.00,273.37 L483.00,273.38 L484.00,273.40 L485.00,273.41 L486.00,273.42 L487.00,273.44 L488.00,273.45 L489.00,273.47 L490.00,273.52 L491.00,273.62 L492.00,273.80 L493.00,274.07 L494.00,274.40 L495.00,274.77 L496.00,275.15 L497.00,275.54 L498.00,275.92 L499.00,276.31 L500.00,276.69 L501.00,277.06 L502.00,277.40 L503.00,277.68 L504.00,277.88 L505.00,277.99 L506.00,278.05 L507.00,278.08 L508.00,278.11 L509.00,278.13 L510.00,278.15 L511.00,278.18 L512.00,278.20 L513.00,278.23 L514.00,278.27 L515.00,278.35 L516.00,278.50 L517.00,278.73 L518.00,279.05 L519.00,279.42 L520.00,279.81 L521.00,280.21 L522.00,280.61 L523.00,281.01 L524.00,281.41 L525.00,281.80 L526.00,282.18 L527.00,282.52 L528.00,282.78 L529.00,282.95 L530.00,283.04 L531.00,283.09 L532.00,283.13 L533.00,283.16 L534.00,283.19 L535.00,283.22 L536.00,283.25 L537.00,283.29 L538.00,283.33 L539.00,283.41 L540.00,283.55 L541.00,283.82 L542.00,284.20 L543.00,284.67 L544.00,285.19 L545.00,285.73 L546.00,286.26 L547.00,286.78 L548.00,287.25 L549.00,287.62 L550.00,287.86 L551.00,287.99 L552.00,288.05 L553.00,288.09 L554.00,288.11 L555.00,288.14 L556.00,288.16 L557.00,288.18 L558.00,288.21 L559.00,288.24 L560.00,288.29 L561.00,288.39 L562.00,288.60 L563.00,288.94 L564.00,289.38 L565.00,289.88 L566.00,290.39 L567.00,290.91 L568.00,291.42 L569.00,291.90 L570.00,292.29 L571.00,292.58 L572.00,292.74 L573.00,292.82 L574.00,292.86 L575.00,292.88 L576.00,292.90 L577.00,292.92 L578.00,292.94 L579.00,292.99 L580.00,293.10 L581.00,293.33 L582.00,293.73 L583.00,294.27 L584.00,294.91 L585.00,295.59 L586.00,296.23 L587.00,296.78 L588.00,297.18 L589.00,297.42 L590.00,297.54 L591.00,297.61 L592.00,297.64 L593.00,297.68 L594.00,297.71 L595.00,297.74 L596.00,297.78 L597.00,297.81 L598.00,297.85 L599.00,297.88 L600.00,297.94 L601.00,298.07 L602.00,298.34 L603.00,298.83 L604.00,299.52 L605.00,300.36 L606.00,301.19 L607.00,301.91 L608.00,302.40 L609.00,302.68 L610.00,302.81 L611.00,302.86 L612.00,302.88 L613.00,302.90 L614.00,302.92 L615.00,302.95 L616.00,303.00 L617.00,303.11 L618.00,303.36 L619.00,303.77 L620.00,304.33 L621.00,304.98 L622.00,305.65 L623.00,306.29 L624.00,306.83 L625.00,307.22 L626.00,307.46 L627.00,307.58 L628.00,307.65 L629.00,307.71 L630.00,307.75 L631.00,307.80 L632.00,307.85 L633.00,307.94 L634.00,308.13 L635.00,308.50 L636.00,309.10 L637.00,309.86 L638.00,310.62 L639.00,311.21 L639.00,312.00" fill="none" stroke="#00e000" stroke-width="1.45" stroke-linejoin="round"/>
<path d="M52.00,132.00 L52.50,190.00 L54.00,199.70 L55.00,199.72 L56.00,199.74 L57.00,199.75 L58.00,199.77 L59.00,199.78 L60.00,199.80 L61.00,199.82 L62.00,199.83 L63.00,199.85 L64.00,199.87 L65.00,199.88 L66.00,199.90 L67.00,199.92 L68.00,199.94 L69.00,199.95 L70.00,199.97 L71.00,199.99 L72.00,200.00 L73.00,200.02 L74.00,200.04 L75.00,200.06 L76.00,200.09 L77.00,200.16 L78.00,200.28 L79.00,200.45 L80.00,200.67 L81.00,200.92 L82.00,201.17 L83.00,201.43 L84.00,201.68 L85.00,201.94 L86.00,202.19 L87.00,202.45 L88.00,202.70 L89.00,202.96 L90.00,203.21 L91.00,203.44 L92.00,203.64 L93.00,203.79 L94.00,203.89 L95.00,203.94 L96.00,203.97 L97.00,204.00 L98.00,204.02 L99.00,204.04 L100.00,204.06 L101.00,204.08 L102.00,204.11 L103.00,204.13 L104.00,204.15 L105.00,204.17 L106.00,204.20 L107.00,204.22 L108.00,204.24 L109.00,204.26 L110.00,204.28 L111.00,204.31 L112.00,204.33 L113.00,204.38 L114.00,204.48 L115.00,204.68 L116.00,205.02 L117.00,205.47 L118.00,205.99 L119.00,206.54 L120.00,207.10 L121.00,207.66 L122.00,208.21 L123.00,208.73 L124.00,209.18 L125.00,209.50 L126.00,209.69 L127.00,209.77 L128.00,209.80 L129.00,209.80 L130.00,209.80 L131.00,209.80 L132.00,209.80 L133.00,209.80 L134.00,209.80 L135.00,209.80 L136.00,209.80 L137.00,209.80 L138.00,209.80 L139.00,209.80 L140.00,209.80 L141.00,209.80 L142.00,209.80 L143.00,209.81 L144.00,209.84 L145.00,209.93 L146.00,210.14 L147.00,210.49 L148.00,210.95 L149.00,211.48 L150.00,212.02 L151.00,212.55 L152.00,213.02 L153.00,213.37 L154.00,213.59 L155.00,213.70 L156.00,213.74 L157.00,213.76 L158.00,213.78 L159.00,213.79 L160.00,213.81 L161.00,213.82 L162.00,213.84 L163.00,213.85 L164.00,213.87 L165.00,213.88 L166.00,213.90 L167.00,213.91 L168.00,213.93 L169.00,213.95 L170.00,213.98 L171.00,214.06 L172.00,214.24 L173.00,214.58 L174.00,215.10 L175.00,215.74 L176.00,216.45 L177.00,217.17 L178.00,217.85 L179.00,218.43 L180.00,218.85 L181.00,219.09 L182.00,219.21 L183.00,219.26 L184.00,219.29 L185.00,219.31 L186.00,219.33 L187.00,219.35 L188.00,219.37 L189.00,219.40 L190.00,219.42 L191.00,219.44 L192.00,219.49 L193.00,219.59 L194.00,219.78 L195.00,220.10 L196.00,220.51 L197.00,220.97 L198.00,221.45 L199.00,221.94 L200.00,222.42 L201.00,222.86 L202.00,223.24 L203.00,223.53 L204.00,223.71 L205.00,223.83 L206.00,223.90 L207.00,223.97 L208.00,224.03 L209.00,224.09 L210.00,224.15 L211.00,224.21 L212.00,224.27 L213.00,224.33 L214.00,224.39 L215.00,224.47 L216.00,224.59 L217.00,224.79 L218.00,225.10 L219.00,225.54 L220.00,226.05 L221.00,226.61 L222.00,227.17 L223.00,227.72 L224.00,228.19 L225.00,228.56 L226.00,228.78 L227.00,228.88 L228.00,228.92 L229.00,228.93 L230.00,228.94 L231.00,228.95 L232.00,228.96 L233.00,228.97 L234.00,228.99 L235.00,229.05 L236.00,229.18 L237.00,229.43 L238.00,229.81 L239.00,230.28 L240.00,230.81 L241.00,231.35 L242.00,231.89 L243.00,232.42 L244.00,232.89 L245.00,233.27 L246.00,233.53 L247.00,233.67 L248.00,233.74 L249.00,233.77 L250.00,233.79 L251.00,233.81 L252.00,233.83 L253.00,233.86 L254.00,233.88 L255.00,233.90 L256.00,233.92 L257.00,233.94 L258.00,233.98 L259.00,234.08 L260.00,234.26 L261.00,234.57 L262.00,234.99 L263.00,235.47 L264.00,235.98 L265.00,236.50 L266.00,237.02 L267.00,237.53 L268.00,238.01 L269.00,238.43 L270.00,238.74 L271.00,238.93 L272.00,239.03 L273.00,239.08 L274.00,239.12 L275.00,239.14 L276.00,239.17 L277.00,239.20 L278.00,239.23 L279.00,239.25 L280.00,239.28 L281.00,239.31 L282.00,239.34 L283.00,239.36 L284.00,239.39 L285.00,239.42 L286.00,239.47 L287.00,239.55 L288.00,239.69 L289.00,239.92 L290.00,240.21 L291.00,240.54 L292.00,240.88 L293.00,241.22 L294.00,241.57 L295.00,241.91 L296.00,242.26 L297.00,242.59 L298.00,242.90 L299.00,243.17 L300.00,243.36 L301.00,243.47 L302.00,243.53 L303.00,243.55 L304.00,243.57 L305.00,243.59 L306.00,243.61 L307.00,243.62 L308.00,243.64 L309.00,243.65 L310.00,243.67 L311.00,243.69 L312.00,243.70 L313.00,243.72 L314.00,243.74 L315.00,243.76 L316.00,243.82 L317.00,243.93 L318.00,244.15 L319.00,244.48 L320.00,244.90 L321.00,245.37 L322.00,245.86 L323.00,246.35 L324.00,246.83 L325.00,247.30 L326.00,247.73 L327.00,248.08 L328.00,248.32 L329.00,248.45 L330.00,248.51 L331.00,248.53 L332.00,248.54 L333.00,248.55 L334.00,248.56 L335.00,248.57 L336.00,248.58 L337.00,248.59 L338.00,248.59 L339.00,248.60 L340.00,248.61 L341.00,248.62 L342.00,248.63 L343.00,248.64 L344.00,248.65 L345.00,248.66 L346.00,248.67 L347.00,248.68 L348.00,248.72 L349.00,248.81 L350.00,248.97 L351.00,249.22 L352.00,249.54 L353.00,249.90 L354.00,250.27 L355.00,250.65 L356.00,251.02 L357.00,251.40 L358.00,251.77 L359.00,252.15 L360.00,252.51 L361.00,252.85 L362.00,253.14 L363.00,253.34 L364.00,253.46 L365.00,253.52 L366.00,253.54 L367.00,253.56 L368.00,253.57 L369.00,253.58 L370.00,253.59 L371.00,253.61 L372.00,253.62 L373.00,253.63 L374.00,253.65 L375.00,253.66 L376.00,253.67 L377.00,253.68 L378.00,253.70 L379.00,253.71 L380.00,253.72 L381.00,253.74 L382.00,253.75 L383.00,253.77 L384.00,253.80 L385.00,253.89 L386.00,254.08 L387.00,254.38 L388.00,254.77 L389.00,255.21 L390.00,255.67 L391.00,256.14 L392.00,256.61 L393.00,257.07 L394.00,257.49 L395.00,257.84 L396.00,258.09 L397.00,258.24 L398.00,258.30 L399.00,258.33 L400.00,258.35 L401.00,258.36 L402.00,258.37 L403.00,258.38 L404.00,258.39 L405.00,258.40 L406.00,258.41 L407.00,258.42 L408.00,258.43 L409.00,258.44 L410.00,258.45 L411.00,258.46 L412.00,258.48 L413.00,258.51 L414.00,258.59 L415.00,258.74 L416.00,258.98 L417.00,259.29 L418.00,259.64 L419.00,260.01 L420.00,260.37 L421.00,260.74 L422.00,261.11 L423.00,261.47 L424.00,261.84 L425.00,262.20 L426.00,262.54 L427.00,262.82 L428.00,263.03 L429.00,263.16 L430.00,263.22 L431.00,263.26 L432.00,263.28 L433.00,263.29 L434.00,263.31 L435.00,263.33 L436.00,263.35 L437.00,263.36 L438.00,263.38 L439.00,263.40 L440.00,263.42 L441.00,263.43 L442.00,263.46 L443.00,263.50 L444.00,263.59 L445.00,263.75 L446.00,263.99 L447.00,264.29 L448.00,264.62 L449.00,264.97 L450.00,265.32 L451.00,265.67 L452.00,266.02 L453.00,266.37 L454.00,266.72 L455.00,267.07 L456.00,267.41 L457.00,267.72 L458.00,267.98 L459.00,268.16 L460.00,268.26 L461.00,268.30 L462.00,268.32 L463.00,268.33 L464.00,268.33 L465.00,268.34 L466.00,268.35 L467.00,268.35 L468.00,268.36 L469.00,268.37 L470.00,268.37 L471.00,268.38 L472.00,268.40 L473.00,268.44 L474.00,268.54 L475.00,268.73 L476.00,269.01 L477.00,269.36 L478.00,269.74 L479.00,270.13 L480.00,270.52 L481.00,270.92 L482.00,271.31 L483.00,271.70 L484.00,272.08 L485.00,272.42 L486.00,272.70 L487.00,272.88 L488.00,272.99 L489.00,273.04 L490.00,273.06 L491.00,273.08 L492.00,273.10 L493.00,273.12 L494.00,273.14 L495.00,273.15 L496.00,273.17 L497.00,273.19 L498.00,273.21 L499.00,273.22 L500.00,273.24 L501.00,273.27 L502.00,273.33 L503.00,273.45 L504.00,273.64 L505.00,273.91 L506.00,274.22 L507.00,274.57 L508.00,274.92 L509.00,275.27 L510.00,275.62 L511.00,275.97 L512.00,276.32 L513.00,276.67 L514.00,277.01 L515.00,277.33 L516.00,277.60 L517.00,277.80 L518.00,277.96 L519.00,278.08 L520.00,278.19 L521.00,278.29 L522.00,278.39 L523.00,278.49 L524.00,278.59 L525.00,278.70 L526.00,278.81 L527.00,278.96 L528.00,279.15 L529.00,279.40 L530.00,279.71 L531.00,280.04 L532.00,280.38 L533.00,280.72 L534.00,281.07 L535.00,281.41 L536.00,281.76 L537.00,282.09 L538.00,282.41 L539.00,282.67 L540.00,282.86 L541.00,282.97 L542.00,283.03 L543.00,283.07 L544.00,283.09 L545.00,283.11 L546.00,283.13 L547.00,283.15 L548.00,283.17 L549.00,283.19 L550.00,283.21 L551.00,283.23 L552.00,283.26 L553.00,283.33 L554.00,283.47 L555.00,283.71 L556.00,284.06 L557.00,284.50 L558.00,284.97 L559.00,285.45 L560.00,285.94 L561.00,286.43 L562.00,286.90 L563.00,287.32 L564.00,287.66 L565.00,287.88 L566.00,288.00 L567.00,288.07 L568.00,288.11 L569.00,288.13 L570.00,288.16 L571.00,288.19 L572.00,288.23 L573.00,288.28 L574.00,288.38 L575.00,288.57 L576.00,288.85 L577.00,289.21 L578.00,289.61 L579.00,290.02 L580.00,290.44 L581.00,290.87 L582.00,291.28 L583.00,291.69 L584.00,292.07 L585.00,292.39 L586.00,292.62 L587.00,292.75 L588.00,292.82 L589.00,292.85 L590.00,292.87 L591.00,292.88 L592.00,292.90 L593.00,292.92 L594.00,292.93 L595.00,292.95 L596.00,292.99 L597.00,293.08 L598.00,293.28 L599.00,293.62 L600.00,294.11 L601.00,294.68 L602.00,295.31 L603.00,295.93 L604.00,296.53 L605.00,297.05 L606.00,297.45 L607.00,297.68 L608.00,297.80 L609.00,297.84 L610.00,297.87 L611.00,297.88 L612.00,297.90 L613.00,297.92 L614.00,297.93 L615.00,297.95 L616.00,298.00 L617.00,298.10 L618.00,298.31 L619.00,298.67 L620.00,299.15 L621.00,299.72 L622.00,300.31 L623.00,300.90 L624.00,301.45 L625.00,301.92 L626.00,302.26 L627.00,302.47 L628.00,302.59 L629.00,302.66 L630.00,302.71 L631.00,302.75 L632.00,302.80 L633.00,302.85 L634.00,302.92 L635.00,303.06 L636.00,303.31 L637.00,303.72 L638.00,304.27 L639.00,304.91 L640.00,305.59 L641.00,306.23 L642.00,306.78 L643.00,307.19 L644.00,307.44 L645.00,307.58 L646.00,307.65 L647.00,307.70 L648.00,307.75 L649.00,307.79 L650.00,307.85 L651.00,307.93 L652.00,308.11 L653.00,308.47 L654.00,309.08 L655.00,309.88 L656.00,310.74 L657.00,311.45 L657.00,312.50" fill="none" stroke="#0000ff" stroke-width="1.45" stroke-linejoin="round"/>
</svg>
<div class="abs lab" style="top:115px">AmpHr</div>
<div class="abs lab" style="top:55.5px">Voltage</div><div class="abs box" style="top:64.2px">0.00</div>
<div class="abs lab" style="top:85px">Current</div><div class="abs box" style="top:93.3px">0.00</div>
<div class="abs box" style="top:123.2px">4.107</div>
<div class="abs lab" style="top:146px">Watts</div><div class="abs box" style="top:154.4px">0.00</div>
<div class="abs lab" style="top:177px">Temp</div><div class="abs box" style="top:185.5px">-</div>

<svg class="abs" style="left:700px;top:200px" width="50" height="80" viewBox="0 0 50 80">
<defs>
<radialGradient id="ledg" cx="0.62" cy="0.35" r="0.75"><stop offset="0" stop-color="#ffffff"/><stop offset="0.5" stop-color="#c8c8c8"/><stop offset="1" stop-color="#4a4a4a"/></radialGradient>
<radialGradient id="ledgr" cx="0.62" cy="0.35" r="0.75"><stop offset="0" stop-color="#8ef08e"/><stop offset="0.45" stop-color="#18a818"/><stop offset="1" stop-color="#064a06"/></radialGradient>
</defs>
<rect x="10" y="9.3" width="25.6" height="25.7" rx="1" fill="#2a2a2a"/>
<circle cx="22.8" cy="22.15" r="11.3" fill="#f4f4f4"/>
<g fill="#262626" transform="translate(22.8,22.15)">
<path id="bl" d="M-0.2,-4.5 C2.6,-5.6 5.6,-8.4 4.2,-11.3 L2.8,-11.5 C0.8,-9.4 -1.6,-7.2 -3,-4 Z"/>
<use href="#bl" transform="rotate(51.4)"/><use href="#bl" transform="rotate(102.8)"/><use href="#bl" transform="rotate(154.2)"/><use href="#bl" transform="rotate(205.6)"/><use href="#bl" transform="rotate(257)"/><use href="#bl" transform="rotate(308.4)"/>
<circle r="5.6" fill="#262626"/>
</g>
<text x="22.8" y="24" font-size="4.6" font-weight="bold" fill="#ddd" text-anchor="middle" font-family="Liberation Sans, sans-serif">CBA</text>
<circle cx="18.8" cy="43.5" r="3.2" fill="url(#ledg)"/>
<circle cx="29.6" cy="43.5" r="3.3" fill="url(#ledgr)"/>
<text x="18.5" y="62" font-size="5.2" fill="#333" textLength="10.2" lengthAdjust="spacingAndGlyphs" font-family="Liberation Sans, sans-serif">4752</text>
<text x="15" y="69.6" font-size="5.2" fill="#333" textLength="18.3" lengthAdjust="spacingAndGlyphs" font-family="Liberation Sans, sans-serif">Standard</text>
</svg>

<div id="status" class="abs"></div>

<svg class="abs" style="left:720px;top:448px" width="30" height="20" viewBox="0 0 30 20">
<rect x="11.6" y="9" width="0.9" height="9" fill="#d6d6da"/>
<ellipse cx="16" cy="12.6" rx="1.9" ry="2.6" fill="none" stroke="#222" stroke-width="1.2"/>
<rect x="15.3" y="15" width="1.4" height="2.6" fill="#222"/>
<path d="M17.4,16.2 L18.6,17.2 L21,13.6" fill="none" stroke="#22e022" stroke-width="1.3"/>
</svg>

<div id="sbot" class="abs"></div>
</body></html>
